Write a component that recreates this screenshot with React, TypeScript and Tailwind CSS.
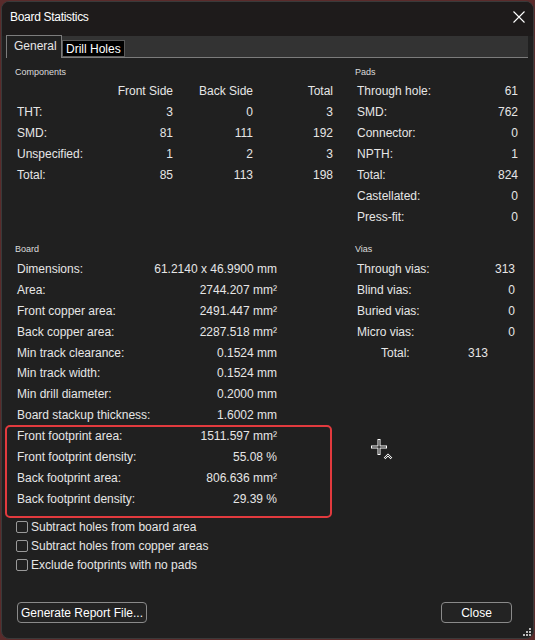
import React from "react";

const COMP = [
  ["THT:", "3", "0", "3"],
  ["SMD:", "81", "111", "192"],
  ["Unspecified:", "1", "2", "3"],
  ["Total:", "85", "113", "198"],
];

const PADS = [
  ["Through hole:", "61"],
  ["SMD:", "762"],
  ["Connector:", "0"],
  ["NPTH:", "1"],
  ["Total:", "824"],
  ["Castellated:", "0"],
  ["Press-fit:", "0"],
];

const SQ = "mm\u00B2";

const BOARD: [string, string][] = [
  ["Dimensions:", "61.2140 x 46.9900 mm"],
  ["Area:", `2744.207 ${SQ}`],
  ["Front copper area:", `2491.447 ${SQ}`],
  ["Back copper area:", `2287.518 ${SQ}`],
  ["Min track clearance:", "0.1524 mm"],
  ["Min track width:", "0.1524 mm"],
  ["Min drill diameter:", "0.2000 mm"],
  ["Board stackup thickness:", "1.6002 mm"],
  ["Front footprint area:", `1511.597 ${SQ}`],
  ["Front footprint density:", "55.08 %"],
  ["Back footprint area:", `806.636 ${SQ}`],
  ["Back footprint density:", "29.39 %"],
];

const VIAS = [
  ["Through vias:", "313"],
  ["Blind vias:", "0"],
  ["Buried vias:", "0"],
  ["Micro vias:", "0"],
];

const CHECKS = ["Subtract holes from board area", "Subtract holes from copper areas", "Exclude footprints with no pads"];

function Section({ children }: { children: React.ReactNode }) {
  return <div className="h-[12px] leading-[12px] text-[9px] text-[#dcdcdc]">{children}</div>;
}

export default function App() {
  return (
    <div className="w-[535px] h-[640px] bg-[#5a2b2b] p-px font-['Liberation_Sans',Arial,sans-serif] text-[12px] text-[#e6e6e6]">
      <div className="relative h-full rounded-[8px] border border-[#3a3a3a] bg-[#202020] flex flex-col overflow-hidden">
        {/* title bar */}
        <div className="h-[34px] pb-[4px] bg-[#1e1b1b] flex items-center justify-between pl-[8px] pr-[8px]">
          <span className="text-[12px] text-white tracking-[-0.3px]">Board Statistics</span>
          <svg width="12" height="12" viewBox="0 0 12 12" className="text-white">
            <path d="M0.5 0.5 L11.5 11.5 M11.5 0.5 L0.5 11.5" stroke="currentColor" strokeWidth="1.1" />
          </svg>
        </div>

        {/* tabs */}
        <div className="ml-[4px] mr-[5px] h-[22px] flex items-end bg-[#333333] border-b border-[#7c7c7c]">
          <div className="h-[23px] -mb-px w-[56px] border border-b-0 border-[#7c7c7c] bg-[#202020] flex items-center pl-[7px] pb-[2px] text-[12px]">
            General
          </div>
          <div className="h-[17px] w-[63px] bg-black border border-[#5a5a5a] flex items-center pl-[3px] text-white">
            Drill Holes
          </div>
        </div>

        {/* panel */}
        <div className="pl-[13px] pt-[8px] flex-1 flex flex-col">
          <div className="flex gap-[20px]">
            <div className="w-[320px]">
              <Section>Components</Section>
              <div className="mt-[3px] pl-[2px] grid grid-cols-[76px_80px_80px_80px]">
                {[["", "Front Side", "Back Side", "Total"], ...COMP].map((r, i) => (
                  <React.Fragment key={i}>
                    {r.map((c, j) => (
                      <div key={j} className={`h-[21px] leading-[21px] whitespace-nowrap ${j ? "text-right" : ""}`}>
                        {c}
                      </div>
                    ))}
                  </React.Fragment>
                ))}
              </div>
            </div>
            <div className="w-[165px]">
              <Section>Pads</Section>
              <div className="mt-[3px] pl-[2px] w-[163px] grid grid-cols-[1fr_auto]">
                {PADS.map(([l, v]) => (
                  <React.Fragment key={l}>
                    <div className="h-[21px] leading-[21px]">{l}</div>
                    <div className="h-[21px] leading-[21px] text-right">{v}</div>
                  </React.Fragment>
                ))}
              </div>
            </div>
          </div>

          <div className="mt-[15px] flex gap-[20px]">
            <div className="w-[320px]">
              <Section>Board</Section>
              <div className="mt-[4px] pl-[2px] w-[262px] grid grid-cols-[1fr_auto]">
                {BOARD.map(([l, v]) => (
                  <React.Fragment key={l}>
                    <div className="h-[20.9px] leading-[21px] whitespace-nowrap">{l}</div>
                    <div className="h-[20.9px] leading-[21px] text-right whitespace-nowrap">{v}</div>
                  </React.Fragment>
                ))}
              </div>
            </div>
            <div className="w-[165px]">
              <Section>Vias</Section>
              <div className="mt-[4px] pl-[2px] w-[160px] grid grid-cols-[1fr_auto]">
                {VIAS.map(([l, v]) => (
                  <React.Fragment key={l}>
                    <div className="h-[20.9px] leading-[21px]">{l}</div>
                    <div className="h-[20.9px] leading-[21px] text-right">{v}</div>
                  </React.Fragment>
                ))}
              </div>
              <div className="pl-[26px] flex h-[21px] leading-[21px]">
                <span className="w-[87px]">Total:</span>
                <span>313</span>
              </div>
            </div>
          </div>

          <div className="mt-[8px] pl-[1px]">
            {CHECKS.map((c) => (
              <label key={c} className="h-[19px] flex items-center gap-[3px]">
                <span className="w-[12px] h-[12px] rounded-[2px] border border-[#9a9a9a]" />
                <span>{c}</span>
              </label>
            ))}
          </div>

          <div className="mt-auto pb-[15px] pl-[2px] pr-[21px] flex justify-between">
            <button className="h-[21px] w-[130px] rounded-[4px] border border-[#8a8a8a] bg-[#232323] text-white text-[12px]">
              Generate Report File...
            </button>
            <button className="h-[21px] w-[71px] rounded-[4px] border border-[#8a8a8a] bg-[#232323] text-white text-[12px]">
              Close
            </button>
          </div>
        </div>

        {/* highlight annotation */}
        <div className="absolute left-[3px] top-[423px] w-[327px] h-[93px] border-2 border-[#e23a3e] rounded-[5px] pointer-events-none" />

        {/* mouse cursor */}
        <svg className="absolute left-[369px] top-[436px]" width="24" height="24" viewBox="0 0 24 24">
          <path d="M8 1 V17 M0 9 H16" stroke="white" strokeWidth="3" />
          <path d="M8 2 V16 M1 9 H15" stroke="black" strokeWidth="1" />
          <path d="M13.5 20.5 L17 17 L20.5 20.5" stroke="white" strokeWidth="2.2" fill="none" />
          <path d="M13.5 20.5 L17 17 L20.5 20.5" stroke="black" strokeWidth="0.8" fill="none" />
        </svg>

        {/* resize grip */}
        <svg className="absolute right-[1px] bottom-[1px]" width="9" height="9" viewBox="0 0 9 9">
          <rect x="6" y="0" width="2" height="2" fill="#bbb" />
          <rect x="3" y="3" width="2" height="2" fill="#bbb" />
          <rect x="6" y="3" width="2" height="2" fill="#bbb" />
          <rect x="0" y="6" width="2" height="2" fill="#bbb" />
          <rect x="3" y="6" width="2" height="2" fill="#bbb" />
          <rect x="6" y="6" width="2" height="2" fill="#bbb" />
        </svg>
      </div>
    </div>
  );
}
